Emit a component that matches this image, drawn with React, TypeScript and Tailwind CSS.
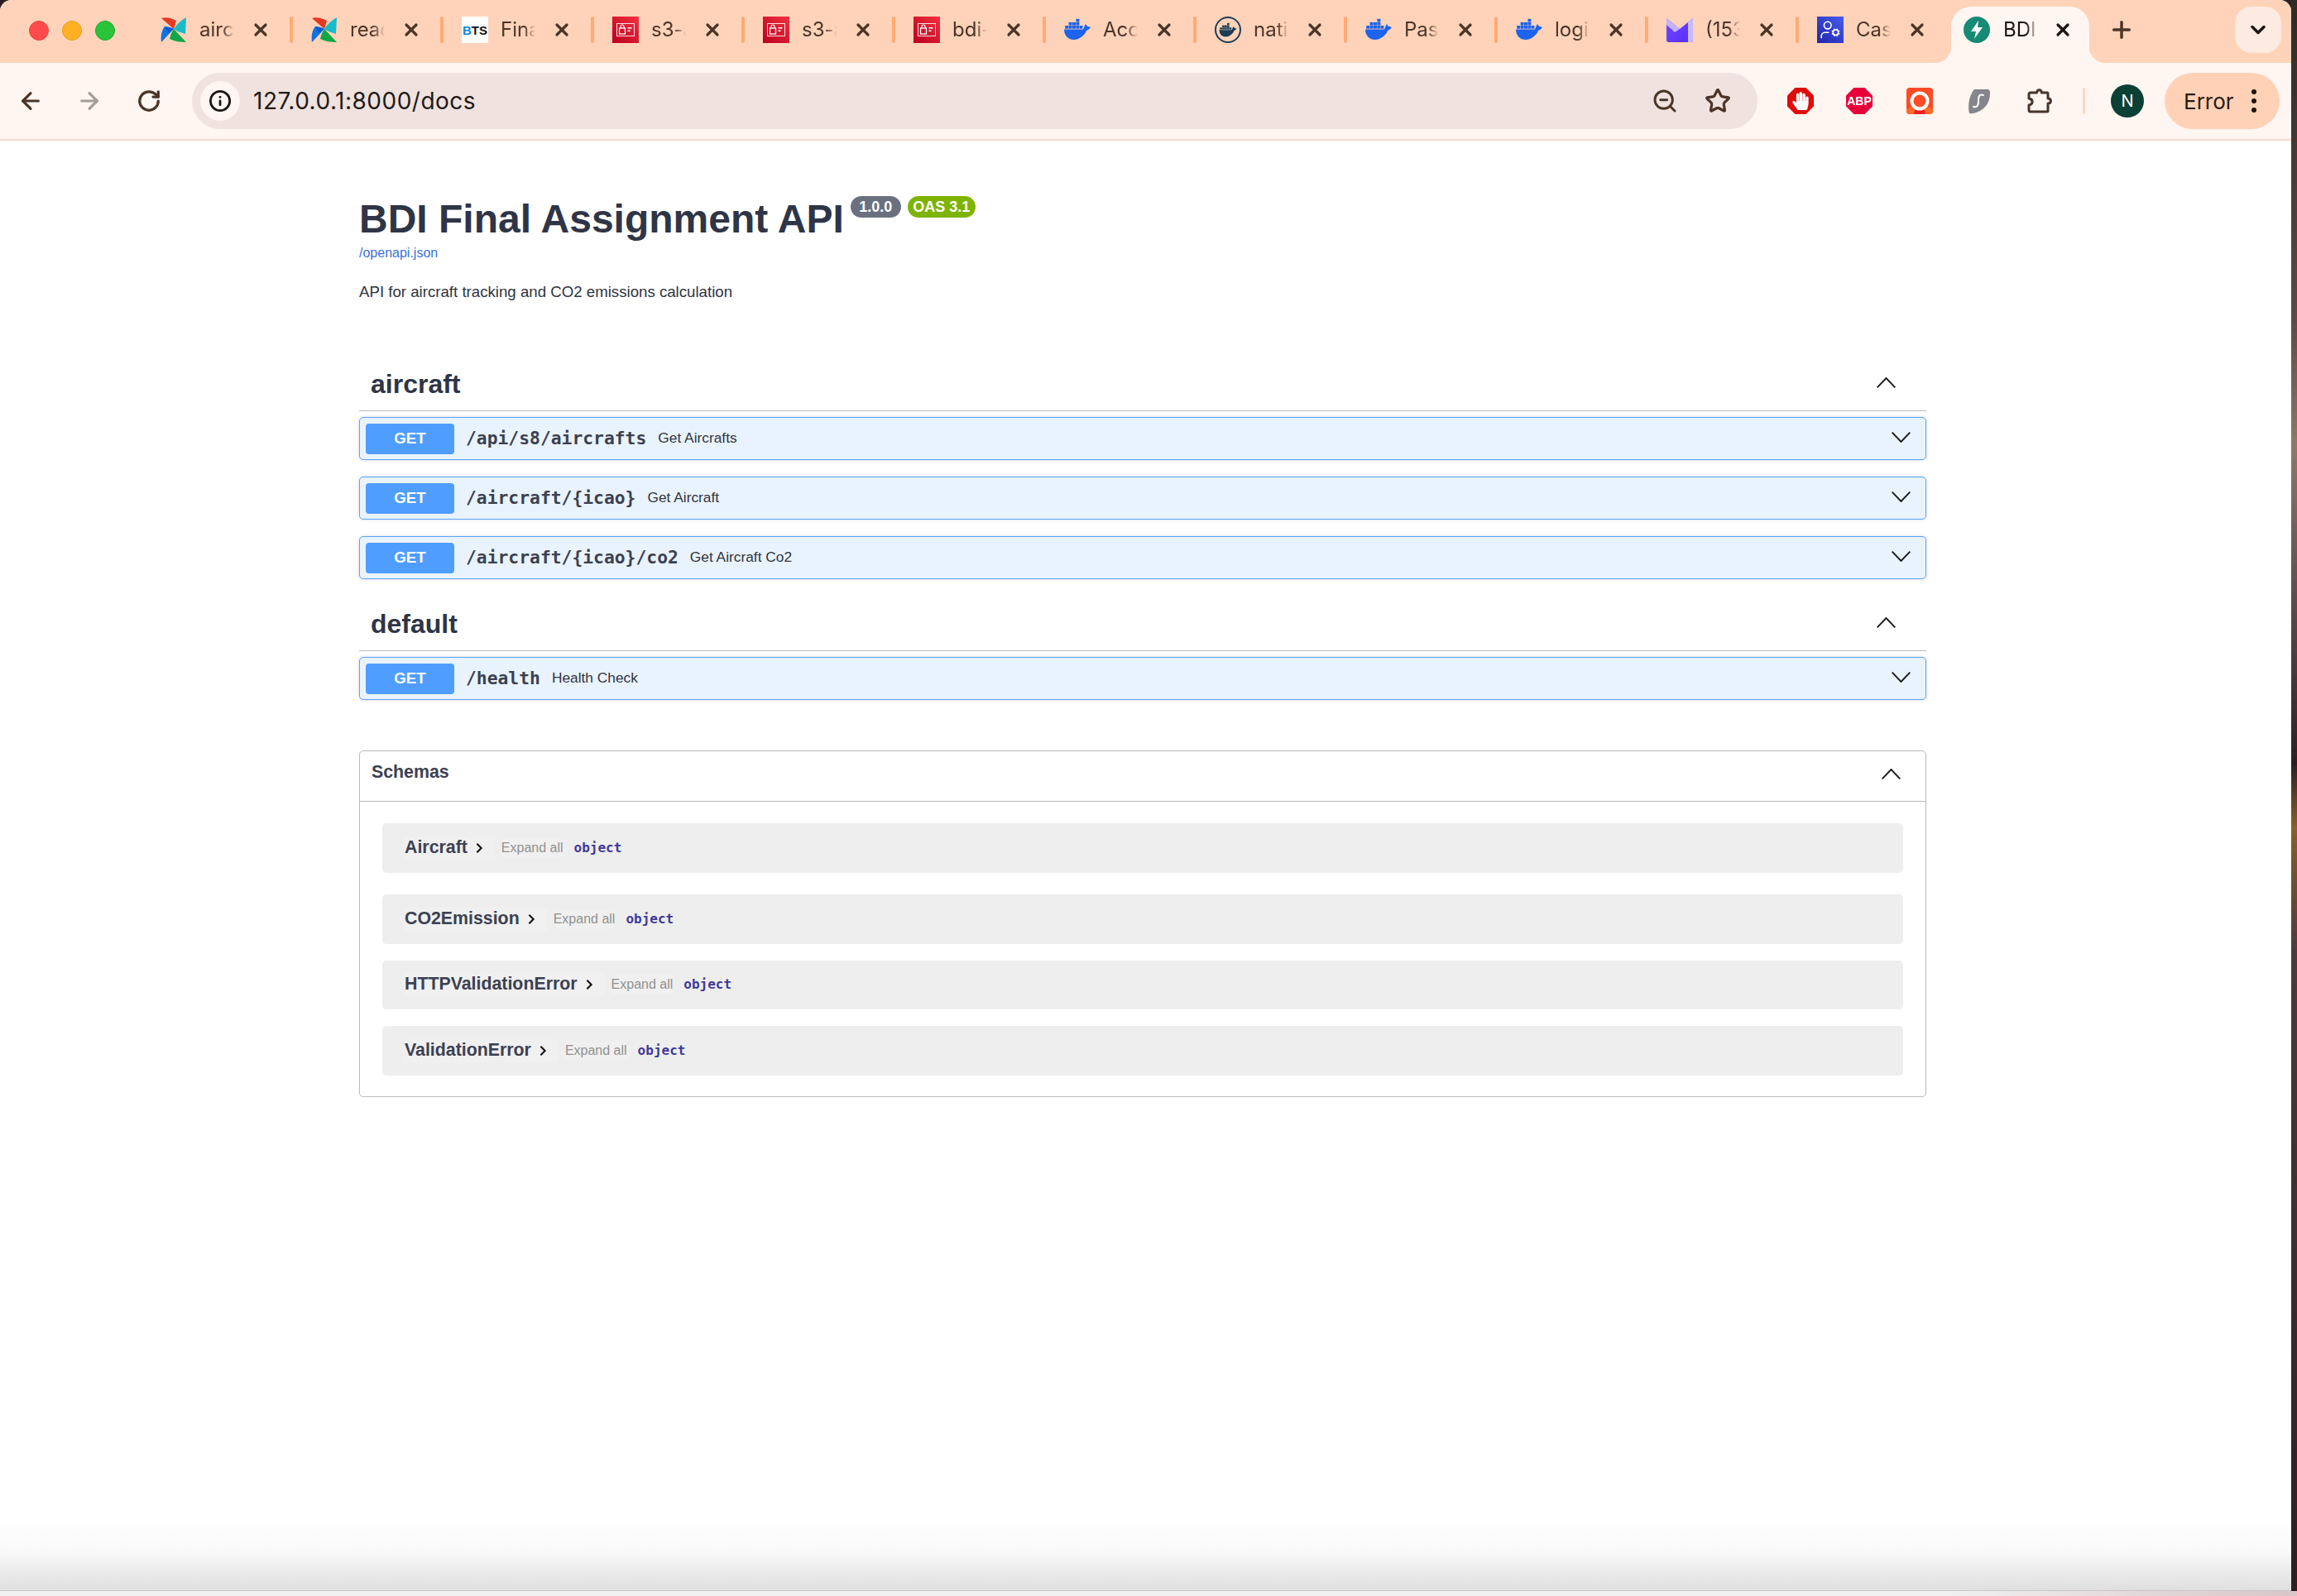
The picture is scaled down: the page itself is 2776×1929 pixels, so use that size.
import React from 'react';
import { ArrowLeft, ArrowRight, RotateCw, Info, ZoomOut, Star, X, Plus, ChevronDown, UserCog } from 'lucide-react';
import { FaHandPaper } from 'react-icons/fa';

const Airflow = () => (
  <svg viewBox="0 0 32 32" className="w-[32px] h-[32px]">
    <path d="M1 2 C7 0 13 2 19 5 C18 9 17 12 16 15 Z" fill="#e43921" />
    <path d="M31 1 L30 21 L21 18 L16 15 C19 10 24 5 31 1 Z" fill="#17bccb" />
    <path d="M31 31 C24 31 17 30 11 27 C12 22 14 18 16 15 Z" fill="#11a847" />
    <path d="M1 31 C0 24 1 17 5 12 C9 12 13 13 16 15 Z" fill="#0f73e0" />
    <path d="M16 15 L5 12 L9 20 Z" fill="#0a5bd0" />
  </svg>
);

const Bts = () => (
  <div className="w-[32px] h-[32px] bg-white flex items-center justify-center font-['Liberation_Sans',sans-serif] font-bold text-[15px] leading-none">
    <span className="text-[#0d86d8]">B</span>
    <span className="text-[#111111]">TS</span>
  </div>
);

const AwsIcon = () => (
  <svg viewBox="0 0 32 32" className="w-[32px] h-[32px]">
    <defs>
      <linearGradient id="awsred" x1="0" y1="1" x2="1" y2="0">
        <stop offset="0" stopColor="#b8001f" />
        <stop offset="1" stopColor="#f4303f" />
      </linearGradient>
    </defs>
    <rect width="32" height="32" fill="url(#awsred)" />
    <rect x="5.5" y="8.5" width="21" height="15" fill="none" stroke="#ffffff" strokeWidth="1" opacity="0.85" />
    <rect x="8.5" y="14" width="7" height="7" fill="none" stroke="#ffffff" strokeWidth="1.3" />
    <path d="M10 14 V12 a2 2 0 0 1 4 0 V14" fill="none" stroke="#ffffff" strokeWidth="1.2" />
    <rect x="18.5" y="13" width="5" height="1.5" fill="#ffffff" />
    <rect x="18.5" y="16.5" width="3" height="1.5" fill="#ffffff" />
  </svg>
);

const Whale = ({ color }: { color: string }) => (
  <g fill={color}>
    <path d="M0 15.5 H23 C24 13 25 10.5 26 9 C27 11 28 12 32 13 C30.5 15.5 28.5 16.5 27 17 C25 23 18 28 12 28 C4 28 0 22 0 15.5 Z" />
    <rect x="1.2" y="11" width="4" height="3.7" />
    <rect x="5.6" y="11" width="4" height="3.7" />
    <rect x="10" y="11" width="4" height="3.7" />
    <rect x="14.4" y="11" width="4" height="3.7" />
    <rect x="18.8" y="11" width="3.6" height="3.7" />
    <rect x="5.6" y="6.9" width="4" height="3.7" />
    <rect x="10" y="6.9" width="4" height="3.7" />
    <rect x="14.4" y="6.9" width="4" height="3.7" />
    <rect x="14.4" y="2.8" width="4" height="3.7" />
  </g>
);

const Docker = () => (
  <svg viewBox="0 0 32 32" className="w-[32px] h-[32px]">
    <Whale color="#1d63ed" />
  </svg>
);

const DockerRound = () => (
  <svg viewBox="0 0 32 32" className="w-[32px] h-[32px]">
    <circle cx="16" cy="16" r="15" fill="none" stroke="#1d3d57" strokeWidth="2" />
    <g transform="translate(5.5 6) scale(0.66)">
      <Whale color="#1d3d57" />
    </g>
  </svg>
);

const Proton = () => (
  <svg viewBox="0 0 32 32" className="w-[32px] h-[32px]">
    <defs>
      <linearGradient id="protonb" x1="0" y1="0" x2="1" y2="1">
        <stop offset="0" stopColor="#6d4aff" />
        <stop offset="1" stopColor="#5a2bff" />
      </linearGradient>
    </defs>
    <path d="M0 2 L16 15 L32 2 V28 a3 3 0 0 1 -3 3 H3 a3 3 0 0 1 -3 -3 Z" fill="url(#protonb)" />
    <path d="M0 2 L16 15 L10 19 L0 10 Z" fill="#c4b3ff" />
    <path d="M32 2 V28 a3 3 0 0 1 -3 3 H26 V7 Z" fill="#c8bbff" />
  </svg>
);

const CasIcon = () => (
  <div className="w-[32px] h-[32px] bg-[linear-gradient(45deg,#1f25a8,#4a5cf0)] flex items-center justify-center">
    <UserCog className="w-[26px] h-[26px] text-white" strokeWidth={1.5} />
  </div>
);

const FastApi = () => (
  <svg viewBox="0 0 32 32" className="w-[32px] h-[32px]">
    <circle cx="16" cy="16" r="16" fill="#158a75" />
    <path d="M18 5 L9 18 H15 L13 27 L23 13 H17 Z" fill="#ffffff" />
  </svg>
);

const Octagon = ({ children, color }: { children: React.ReactNode; color: string }) => (
  <div className="relative w-[32px] h-[32px]">
    <svg viewBox="0 0 32 32" className="w-[32px] h-[32px]">
      <polygon points="9.5,0 22.5,0 32,9.5 32,22.5 22.5,32 9.5,32 0,22.5 0,9.5" fill={color} />
    </svg>
    <div className="absolute inset-0 flex items-center justify-center">{children}</div>
  </div>
);

const Opera = () => (
  <svg viewBox="0 0 32 32" className="w-[32px] h-[32px]">
    <rect width="32" height="32" rx="4" fill="#ff4a26" />
    <path d="M0 26 L9 22 H23 L32 26 V28 a4 4 0 0 1 -4 4 H4 a4 4 0 0 1 -4 -4 Z" fill="#ff6a2a" />
    <path d="M9 32 L11 24 H21 L23 32 Z" fill="#f02020" />
    <circle cx="16" cy="16" r="9.5" fill="none" stroke="#ffffff" strokeWidth="4" />
  </svg>
);

const Surfshark = () => (
  <svg viewBox="0 0 32 32" className="w-[32px] h-[32px]">
    <path d="M10 2 H26 Q29 2 29 6 C29 14 27 20 20 26 Q12 32 4 31 C2 24 3 10 10 2 Z" fill="#85858c" />
    <path d="M21 9 C15 7 15 12 15 16 C15 21 14 24 9 23" fill="none" stroke="#ffffff" strokeWidth="2" strokeLinecap="round" />
  </svg>
);

const Extensions = () => (
  <svg viewBox="0 0 32 32" className="w-[32px] h-[32px]" fill="none" stroke="#47352a" strokeWidth="3" strokeLinejoin="round">
    <path d="M3 8 a2 2 0 0 1 2 -2 H12.5 C13 1.5 18 1.5 18.5 6 H25 a1 1 0 0 1 1 1 V13 C30.5 13 30.5 19 26 19 V28 a1 1 0 0 1 -1 1 H5 a2 2 0 0 1 -2 -2 V21 C8.5 20 8.5 14 3 13 Z" />
  </svg>
);

const tabs: { icon: React.ReactNode; title: string }[] = [
  { icon: <Airflow />, title: 'airc' },
  { icon: <Airflow />, title: 'read' },
  { icon: <Bts />, title: 'Fina' },
  { icon: <AwsIcon />, title: 's3-a' },
  { icon: <AwsIcon />, title: 's3-a' },
  { icon: <AwsIcon />, title: 'bdi-' },
  { icon: <Docker />, title: 'Acc' },
  { icon: <DockerRound />, title: 'nati' },
  { icon: <Docker />, title: 'Pas' },
  { icon: <Docker />, title: 'logi' },
  { icon: <Proton />, title: '(153' },
  { icon: <CasIcon />, title: 'Cas' },
];

const Chevron = ({ up, className }: { up?: boolean; className?: string }) => (
  <svg viewBox="0 0 23 13" className={`w-[23px] h-[13px] ${className ?? ''}`} fill="none" stroke="#1a1a1a" strokeWidth="1.9">
    <polyline points={up ? '0.7,12.3 11.5,1 22.3,12.3' : '0.7,0.7 11.5,12 22.3,0.7'} />
  </svg>
);

const TabStrip = () => (
  <div className="h-[76px] bg-[#ffd3b9] flex items-start font-['Inter',sans-serif]">
    <div className="w-[172px] h-[76px] pl-[35px] pt-[25px] flex gap-[16px] items-start">
      <div className="w-[24px] h-[24px] rounded-full bg-[#ff4b4b] border border-[#e0443e]" />
      <div className="w-[24px] h-[24px] rounded-full bg-[#ffb024] border border-[#dea123]" />
      <div className="w-[24px] h-[24px] rounded-full bg-[#2ac33a] border border-[#1aab29]" />
    </div>
    {tabs.map((tab, i) => (
      <div key={i} className="w-[182px] h-[32px] mt-[20px] pl-[22px] flex items-center">
        {tab.icon}
        <div className="ml-[15px] w-[43px] whitespace-nowrap text-[24px] leading-[32px] text-[#4a3528] [mask-image:linear-gradient(to_right,black_65%,transparent_98%)]">
          {tab.title}
        </div>
        <X className="ml-[19px] w-[24px] h-[24px] text-[#4a3528] shrink-0" strokeWidth={3.2} />
        {i < 11 && <div className="ml-auto w-[4px] h-[32px] rounded-full bg-[#ffab73]" />}
      </div>
    ))}
    <div className="relative ml-[2px] w-[167px] h-[68px] mt-[8px] pt-[12px] pl-[15px] bg-[#fff5f1] rounded-t-[24px] flex items-start">
      <span className="absolute bottom-0 -left-[20px] w-[20px] h-[20px] bg-[radial-gradient(circle_at_0_0,transparent_20px,#fff5f1_20.5px)]" />
      <span className="absolute bottom-0 -right-[20px] w-[20px] h-[20px] bg-[radial-gradient(circle_at_100%_0,transparent_20px,#fff5f1_20.5px)]" />
      <FastApi />
      <div className="ml-[16px] w-[43px] whitespace-nowrap text-[24px] leading-[32px] text-[#1c1410] [mask-image:linear-gradient(to_right,black_65%,transparent_98%)]">
        BDI
      </div>
      <X className="ml-[17px] mt-[4px] w-[24px] h-[24px] text-[#1c1410] shrink-0" strokeWidth={3.2} />
    </div>
    <Plus className="ml-[23px] mt-[20px] w-[32px] h-[32px] text-[#4a3528]" strokeWidth={2.6} />
    <div className="ml-auto mr-[12px] mt-[8px] w-[56px] h-[56px] rounded-[20px] bg-[#fdeae0] flex items-center justify-center">
      <ChevronDown className="w-[28px] h-[28px] text-[#1c1410]" strokeWidth={3} />
    </div>
  </div>
);

const Toolbar = () => (
  <div className="h-[94px] bg-[#fff5f1] border-b-2 border-[#f2d9cb] flex items-center pl-[21px] font-['Inter',sans-serif]">
    <ArrowLeft className="w-[32px] h-[32px] text-[#4a3528]" strokeWidth={2.4} />
    <ArrowRight className="ml-[39px] w-[32px] h-[32px] text-[#a89c96]" strokeWidth={2.4} />
    <RotateCw className="ml-[41px] w-[30px] h-[30px] text-[#4a3528]" strokeWidth={2.6} />
    <div className="ml-[37px] w-[1892px] h-[68px] rounded-full bg-[#efe2df] flex items-center pl-[10px] pr-[32px]">
      <div className="w-[48px] h-[48px] rounded-full bg-[#fff5f1] flex items-center justify-center">
        <Info className="w-[28px] h-[28px] text-[#1c1410]" strokeWidth={2.4} />
      </div>
      <span className="ml-[16px] text-[28px] tracking-[0.5px] text-[#1f1a18]">127.0.0.1:8000/docs</span>
      <ZoomOut className="ml-auto w-[32px] h-[32px] text-[#4a3528]" strokeWidth={2.2} />
      <Star className="ml-[32px] w-[32px] h-[32px] text-[#4a3528]" strokeWidth={2.4} />
    </div>
    <div className="ml-[36px]">
      <Octagon color="#e00b0b">
        <FaHandPaper className="w-[20px] h-[22px] text-white" />
      </Octagon>
    </div>
    <div className="ml-[39px]">
      <Octagon color="#e6003a">
        <span className="font-['Liberation_Sans',sans-serif] font-bold text-[14px] text-white leading-none">ABP</span>
      </Octagon>
    </div>
    <div className="ml-[41px]">
      <Opera />
    </div>
    <div className="ml-[40px]">
      <Surfshark />
    </div>
    <div className="ml-[41px]">
      <Extensions />
    </div>
    <div className="ml-[36px] w-[3px] h-[32px] rounded-full bg-[#ffd9c2]" />
    <div className="ml-[31px] w-[40px] h-[40px] rounded-full bg-[#0b4034] flex items-center justify-center text-white text-[20px]">
      N
    </div>
    <div className="ml-[25px] w-[139px] h-[68px] rounded-full bg-[#ffd2b8] flex items-center pl-[23px] text-[#2a1a10] text-[26px]">
      Error
      <div className="ml-[21px] flex flex-col gap-[5px]">
        <span className="w-[6px] h-[6px] rounded-full bg-[#1c1410]" />
        <span className="w-[6px] h-[6px] rounded-full bg-[#1c1410]" />
        <span className="w-[6px] h-[6px] rounded-full bg-[#1c1410]" />
      </div>
    </div>
  </div>
);

const Operation = ({ path, summary }: { path: string; summary: string }) => (
  <div className="h-[52px] flex items-center bg-[#e9f3fe] border-[1.5px] border-[#5aa2fd] rounded-[5px] shadow-[0_0_4px_rgba(0,0,0,0.15)] pl-[7px] pr-[18px]">
    <div className="w-[107px] h-[37px] rounded-[4px] bg-[#4f9dff] flex items-center justify-center text-white font-bold text-[18.67px]">
      GET
    </div>
    <span className="ml-[14px] font-['DejaVu_Sans_Mono',monospace] font-bold text-[21.33px] text-[#3b4151]">{path}</span>
    <span className="ml-[14px] text-[17.33px] text-[#30343f]">{summary}</span>
    <Chevron className="ml-auto mb-[4px]" />
  </div>
);

const TagHeader = ({ name }: { name: string }) => (
  <div className="flex justify-between pl-[14px] pr-[37px] pb-[12px] border-b border-[#bbbbbb]">
    <h3 className="text-[32px] leading-[40px] font-bold text-[#2f3546]">{name}</h3>
    <Chevron up className="mt-[12px]" />
  </div>
);

const models = [
  { name: 'Aircraft', gap: 'mb-[26.5px]' },
  { name: 'CO2Emission', gap: 'mb-[20px]' },
  { name: 'HTTPValidationError', gap: 'mb-[20px]' },
  { name: 'ValidationError', gap: '' },
];

const Schemas = () => (
  <div className="mt-[61px] border border-[#bbbbbb] rounded-[5px] pb-[25px]">
    <div className="h-[60px] flex items-center justify-between pl-[14px] pr-[30px] border-b border-[#bbbbbb] box-content">
      <span className="mb-[8px] text-[21.33px] font-bold text-[#3b4151]">Schemas</span>
      <Chevron up className="mb-[5px]" />
    </div>
    <div className="pt-[26px] px-[27px]">
      {models.map((m) => (
        <div key={m.name} className={`h-[59.5px] flex items-center bg-[#eeeeee] rounded-[5px] pl-[27px] ${m.gap}`}>
          <div className="h-[28px] pr-[14px] flex items-center bg-[#f0f0f0] text-[21.33px] font-bold text-[#3b4151]">
            {m.name}
            <svg viewBox="0 0 10 16" className="ml-[9px] w-[10px] h-[14px]" fill="none" stroke="#111111" strokeWidth="2.4">
              <polyline points="2,2 8,8 2,14" />
            </svg>
          </div>
          <span className="ml-[8px] text-[16px] text-[#909090] bg-[#f0f0f0]">Expand all</span>
          <span className="ml-[13px] font-['DejaVu_Sans_Mono',monospace] font-bold text-[16px] text-[#3f3a97]">object</span>
        </div>
      ))}
    </div>
  </div>
);

const Docs = () => (
  <div className="flex-1 ml-[434px] w-[1894px] pt-[64px] font-['Liberation_Sans',Arial,sans-serif]">
    <div className="flex items-start h-[60px]">
      <h2 className="text-[48px] leading-[62px] font-bold text-[#2f3546]">BDI Final Assignment API</h2>
      <div className="ml-[8px] mt-[3px] w-[61px] h-[26px] rounded-full bg-[#6b7080] flex items-center justify-center text-[18px] font-bold text-white">
        1.0.0
      </div>
      <div className="ml-[8px] mt-[3px] w-[82px] h-[26px] rounded-full bg-[#7eb300] flex items-center justify-center text-[18px] font-bold text-white">
        OAS 3.1
      </div>
    </div>
    <div className="text-[16px] leading-[24px] text-[#3b6fd8]">/openapi.json</div>
    <p className="mt-[22px] text-[18.67px] leading-[26px] text-[#30343f]">API for aircraft tracking and CO2 emissions calculation</p>

    <div className="mt-[78px]">
      <TagHeader name="aircraft" />
      <div className="mt-[7px] flex flex-col gap-[20px]">
        <Operation path="/api/s8/aircrafts" summary="Get Aircrafts" />
        <Operation path="/aircraft/{icao}" summary="Get Aircraft" />
        <Operation path="/aircraft/{icao}/co2" summary="Get Aircraft Co2" />
      </div>
    </div>

    <div className="mt-[34px]">
      <TagHeader name="default" />
      <div className="mt-[7px]">
        <Operation path="/health" summary="Health Check" />
      </div>
    </div>

    <Schemas />
  </div>
);

export default function App() {
  return (
    <div className="w-[2776px] h-[1929px] flex flex-col overflow-hidden bg-[#2a2024]">
      <div className="h-[1923px] flex">
        <div className="w-[2769px] flex flex-col bg-white rounded-t-[14px] overflow-hidden">
          <TabStrip />
          <Toolbar />
          <Docs />
          <div className="h-[90px] bg-[linear-gradient(to_bottom,#ffffff,#fafafa_45%,#dfdfdf)] border-b border-[#c8c8c8]" />
        </div>
        <div className="flex-1 bg-[linear-gradient(to_bottom,#2e2a26,#5b4a45_20%,#8a7a68_28%,#5a4a4e_38%,#2a2024_48%,#8a5f2a_52%,#4a3a3e_60%,#3a2c30_80%,#2a2024)]" />
      </div>
      <div className="h-[6px] bg-[linear-gradient(to_right,#f0f0f0_85%,#d8c6c8)]" />
    </div>
  );
}
